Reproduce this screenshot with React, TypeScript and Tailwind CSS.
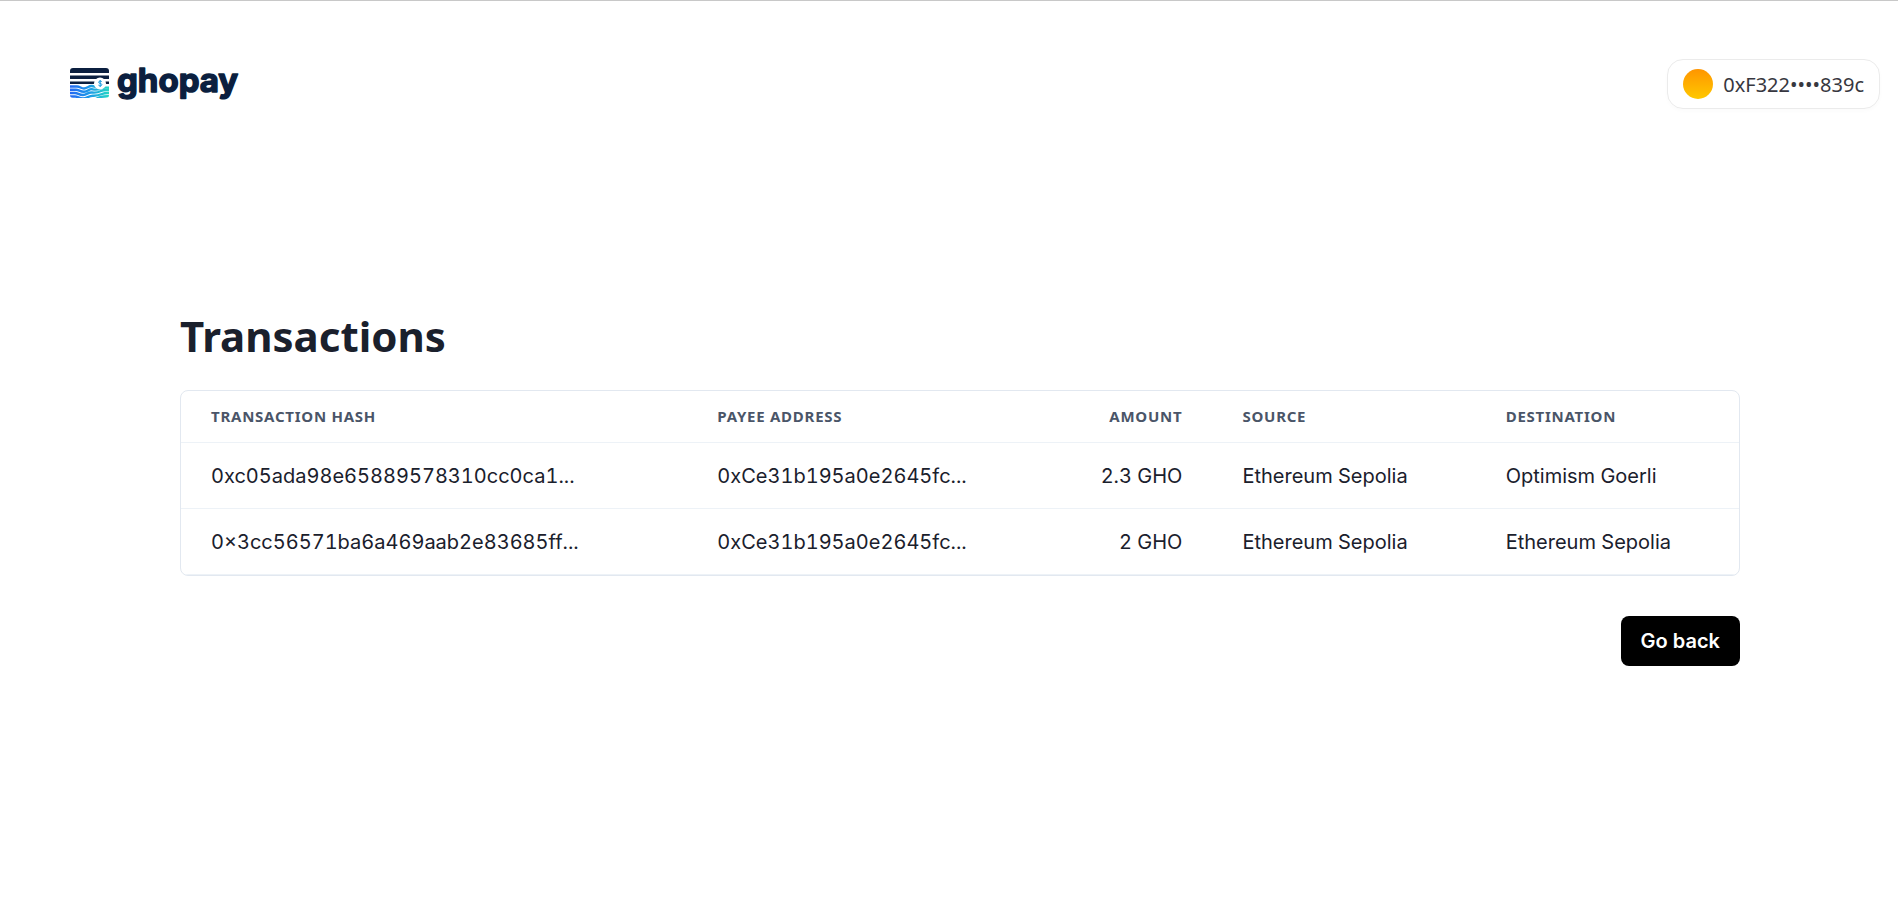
type Transaction = {
  hash: string
  payee: string
  amount: string
  source: string
  destination: string
}

const TRANSACTIONS: Transaction[] = [
  {
    hash: '0xc05ada98e65889578310cc0ca1...',
    payee: '0xCe31b195a0e2645fc...',
    amount: '2.3 GHO',
    source: 'Ethereum Sepolia',
    destination: 'Optimism Goerli',
  },
  {
    hash: '0×3cc56571ba6a469aab2e83685ff...',
    payee: '0xCe31b195a0e2645fc...',
    amount: '2 GHO',
    source: 'Ethereum Sepolia',
    destination: 'Ethereum Sepolia',
  },
]

export default function App() {
  return (
    <div className="min-h-screen border-t border-[#c8c8c8] bg-white font-['Inter',sans-serif] text-xl text-[#1a202c]">
      <Header />
      <main className="mt-[200px] pl-[180px] pr-[158px]">
        <h1 className="font-['Noto_Sans',sans-serif] text-[42px] font-bold leading-[53px]">
          Transactions
        </h1>
        <TransactionTable rows={TRANSACTIONS} />
        <div className="mt-10 flex justify-end">
          <button className="h-[50px] rounded-lg bg-black px-5 font-semibold text-white">
            Go back
          </button>
        </div>
      </main>
    </div>
  )
}

function Header() {
  return (
    <header className="flex items-center justify-between pl-[70px] pr-[18px] pt-[58px]">
      <a href="#">
        <Logo />
      </a>
      <button className="flex h-[50px] items-center gap-2.5 rounded-2xl border border-[#ebebeb] px-[15px] font-['Noto_Sans',sans-serif] text-[#373740] shadow-[0_2px_4px_rgba(0,0,0,0.02)]">
        <span className="size-[30px] rounded-full bg-linear-to-b from-[#ff9500] to-[#ffc800]" />
        <span className="pt-0.5">0xF322••••839c</span>
      </button>
    </header>
  )
}

function TransactionTable({ rows }: { rows: Transaction[] }) {
  return (
    <div className="mt-7 overflow-hidden rounded-lg border border-[#e2e8f0]">
      <table className="w-full table-fixed text-left tabular-nums lining-nums">
        <colgroup>
          <col className="w-[32.5%]" />
          <col className="w-[20%]" />
          <col />
          <col className="w-[16.9%]" />
          <col className="w-[16.9%]" />
        </colgroup>
        <thead className="font-['Noto_Sans',sans-serif] text-[15px] uppercase leading-5 tracking-wider text-[#4a5568]">
          <tr className="h-[51px] border-b border-[#edf2f7]">
            <th className="px-[30px] font-bold">Transaction hash</th>
            <th className="px-[30px] font-bold">Payee address</th>
            <th className="px-[30px] text-right font-bold">Amount</th>
            <th className="px-[30px] font-bold">Source</th>
            <th className="px-[30px] font-bold">Destination</th>
          </tr>
        </thead>
        <tbody className="whitespace-nowrap leading-[25px]">
          {rows.map((row) => (
            <tr key={row.hash} className="h-[66px] border-b border-[#edf2f7]">
              <td className="px-[30px] pt-0.5">{row.hash}</td>
              <td className="px-[30px] pt-0.5">{row.payee}</td>
              <td className="px-[30px] pt-0.5 text-right">{row.amount}</td>
              <td className="px-[30px] pt-0.5">{row.source}</td>
              <td className="px-[30px] pt-0.5">{row.destination}</td>
            </tr>
          ))}
        </tbody>
      </table>
    </div>
  )
}

// Card with a striped top half, waves below and a coin on the right, then the wordmark
function Logo() {
  return (
    <svg width="176" height="50" viewBox="0 0 176 50" fill="none">
      <defs>
        <linearGradient id="wave" x1="0" y1="0" x2="39" y2="0" gradientUnits="userSpaceOnUse">
          <stop offset="0" stopColor="#2468f2" />
          <stop offset="0.5" stopColor="#1e9be8" />
          <stop offset="1" stopColor="#25d6c4" />
        </linearGradient>
        <clipPath id="card">
          <rect width="39" height="30" rx="3" />
        </clipPath>
      </defs>
      <g transform="translate(0 9)">
        <g clipPath="url(#card)">
          <path d="M0 0h39v5H0z" fill="#0b1f3f" />
          <path d="M0 7.5h39v3.5H0z" fill="#0b1f3f" />
          <path d="M0 13.5h39v2.5H0z" fill="#0b1f3f" />
          <g stroke="url(#wave)" strokeWidth="2.4">
            <path d="M0 18.500h7c3 0 4 2 7 2s5-3 8-2.500 4 1 7 1" />
            <path d="M0 21.700h6c3 0 4 2 8 2s5-3 8-2.500 5 1 8-.5 5-1 9-1" />
            <path d="M0 25h5c3 0 4 2 8 2s5-3 9-2.500 6 0 9-1.500 5-1 8-1" />
            <path d="M0 28.500h5c3 0 4 2 8 2s6-3 10-2.800 6-.5 9-1.700 4-1 7-1" />
            <path d="M26 31c4-2.500 7-3 13-2.700" />
          </g>
          <circle cx="30" cy="15.500" r="6" fill="#fff" />
        </g>
        <path
          d="M31.800 13.700c-.4-.8-3.200-1-3.200.5 0 1.600 3.300.8 3.300 2.500 0 1.500-2.900 1.400-3.500.4M30.200 12v7"
          stroke="#1b9be0"
          strokeWidth="1"
        />
      </g>
      <text
        x="47"
        y="33"
        fill="#0b1f3f"
        stroke="#0b1f3f"
        strokeWidth="1.5"
        strokeLinejoin="round"
        className="font-['Inter',sans-serif] text-[33px] font-bold"
      >
        ghopay
      </text>
    </svg>
  )
}
